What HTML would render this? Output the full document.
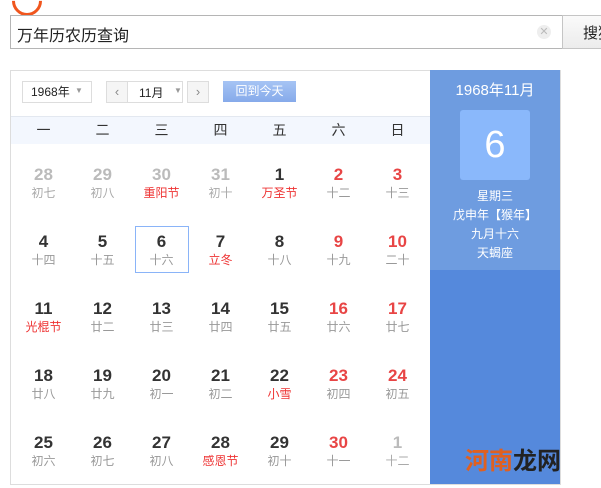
<!DOCTYPE html><html><head><meta charset="utf-8"><style>
body{margin:0;width:601px;height:488px;overflow:hidden;background:#fff;font-family:"Liberation Sans","Noto Sans CJK SC",sans-serif;position:relative}
.a{position:absolute}
.cell{position:absolute;width:59px;height:67px;text-align:center}
.n{font-weight:bold;font-size:17px;color:#333;margin-top:14px;line-height:20px}
.l{font-size:12px;color:#999;line-height:16px}
.g .n{color:#bbb}.g .l{color:#aaa}
.r .n{color:#e84545}
.wk{position:absolute;top:120px;font-size:14px;color:#333;width:59px;text-align:center}
</style></head><body>
<div class="a" style="left:12px;top:-14px;width:24px;height:24px;border:3px solid #f0561e;border-radius:50%;border-top-color:transparent;border-left-color:transparent;transform:rotate(45deg)"></div>
<div class="a" style="left:10px;top:15px;width:551px;height:32px;border:1px solid #b5b5b5;border-right:none"></div>
<div class="a" style="left:17px;top:22px;font-size:16px;color:#222">万年历农历查询</div>
<div class="a" style="left:537px;top:25px;width:14px;height:14px;border-radius:50%;background:#eee;color:#bbb;font-size:11px;text-align:center;line-height:14px">✕</div>
<div class="a" style="left:562px;top:15px;width:50px;height:32px;border:1px solid #c5c5c5;background:linear-gradient(#fafafa,#ececec)"></div>
<div class="a" style="left:583px;top:22px;font-size:15px;color:#222;white-space:nowrap">搜狗</div>
<div class="a" style="left:10px;top:70px;width:549px;height:413px;border:1px solid #ddd"></div>
<div class="a" style="left:22px;top:81px;width:60px;height:20px;border:1px solid #ddd;font-size:12px;line-height:20px;padding-left:8px;color:#222">1968年</div>
<div class="a" style="left:75px;top:86px;color:#999;font-size:8px">▼</div>
<div class="a" style="left:106px;top:81px;width:75px;height:20px;border:1px solid #ddd;background:#fff"></div>
<div class="a" style="left:106px;top:81px;width:20px;height:20px;border:1px solid #ddd;background:#f5f5f5;text-align:center;color:#888;font-size:13px;line-height:20px">‹</div>
<div class="a" style="left:187px;top:81px;width:20px;height:20px;border:1px solid #ddd;background:#f5f5f5;text-align:center;color:#888;font-size:13px;line-height:20px">›</div>
<div class="a" style="left:139px;top:84px;font-size:12px;color:#222">11月</div>
<div class="a" style="left:174px;top:86px;color:#999;font-size:8px">▼</div>
<div class="a" style="left:223px;top:81px;width:73px;height:21px;background:linear-gradient(#a6c4f4,#86aaea);color:#fff;font-size:12px;text-align:center;line-height:21px">回到今天</div>
<div class="a" style="left:11px;top:116px;width:419px;height:27px;background:#f3f7fe;border-top:1px solid #e3e8f0"></div>
<div class="wk" style="left:14px">一</div><div class="wk" style="left:73px">二</div><div class="wk" style="left:132px">三</div><div class="wk" style="left:191px">四</div><div class="wk" style="left:250px">五</div><div class="wk" style="left:309px">六</div><div class="wk" style="left:368px">日</div>
<div class="a" style="left:430px;top:70px;width:130px;height:200px;background:#6e9ce0"></div>
<div class="a" style="left:430px;top:270px;width:130px;height:214px;background:#5589dc"></div>
<div class="a" style="left:430px;top:79px;width:130px;text-align:center;color:#fff;font-size:15px">1968年11月</div>
<div class="a" style="left:460px;top:110px;width:70px;height:70px;background:#8ab8fb;border-radius:3px;color:#fff;font-size:38px;text-align:center;line-height:70px">6</div>
<div class="a" style="left:430px;top:187px;width:130px;text-align:center;color:#fff;font-size:12px;line-height:19px">星期三<br>戊申年【猴年】<br>九月十六<br>天蝎座</div>
<div class="a" style="left:465px;top:441px;font-size:24px;font-weight:bold;color:#e06020">河南<span style="color:#222">龙网</span></div>
<div class="a" style="left:135px;top:226px;width:52px;height:45px;border:1px solid #8ab4f8"></div>
<div id="g"></div>
<script>
var d=[["28","初七","g"],["29","初八","g"],["30","重阳节","gh"],["31","初十","g"],["1","万圣节","h"],["2","十二","r"],["3","十三","r"],
["4","十四"],["5","十五"],["6","十六"],["7","立冬","h"],["8","十八"],["9","十九","r"],["10","二十","r"],
["11","光棍节","h"],["12","廿二"],["13","廿三"],["14","廿四"],["15","廿五"],["16","廿六","r"],["17","廿七","r"],
["18","廿八"],["19","廿九"],["20","初一"],["21","初二"],["22","小雪","h"],["23","初四","r"],["24","初五","r"],
["25","初六"],["26","初七"],["27","初八"],["28","感恩节","h"],["29","初十"],["30","十一","r"],["1","十二","g"]];
var h="";d.forEach(function(c,i){var x=14+59*(i%7),y=151+67*Math.floor(i/7);var f=c[2]||"";var cls=(f.indexOf("g")>=0?"g ":"")+(f.indexOf("r")>=0?"r":"");var lh=f.indexOf("h")>=0?' style="color:#e33"':'';
h+='<div class="cell '+cls+'" style="left:'+x+'px;top:'+y+'px"><div class="n">'+c[0]+'</div><div class="l"'+lh+'>'+c[1]+'</div></div>';});
document.getElementById("g").innerHTML=h;
</script>
</body></html>
